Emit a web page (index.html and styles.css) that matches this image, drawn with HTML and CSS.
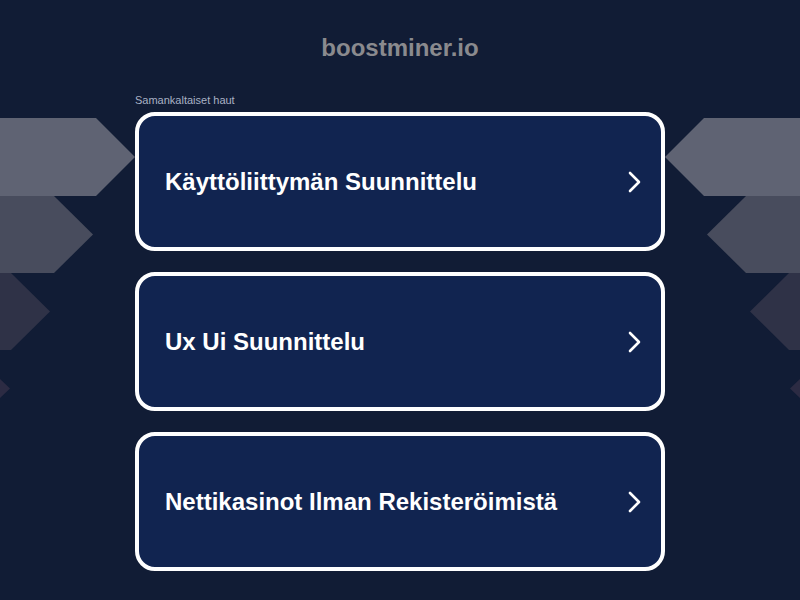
FILE: index.html
```html
<!DOCTYPE html>
<html lang="fi">
  <head>
    <meta charset="UTF-8" />
    <meta name="viewport" content="width=device-width, initial-scale=1.0" />
    <title>boostminer.io</title>
    <link rel="stylesheet" href="styles.css">
  </head>
  <body>
    <svg class="backdrop" width="800" height="600" viewBox="0 0 800 600">
      <polygon fill="#5f6373" points="0,118 96,118 135,157 96,196 0,196" />
      <polygon fill="#484c5d" points="0,196 54,196 93,234.5 54,273 0,273" />
      <polygon fill="#2f3247" points="0,273 11,273 50,311.5 11,350 0,350" />
      <polygon fill="#2c2b43" points="0,350 -31,350 10,388.5 -31,427 0,427" />
      <polygon fill="#5f6373" points="800,118 704,118 665,157 704,196 800,196" />
      <polygon fill="#484c5d" points="800,196 746,196 707,234.5 746,273 800,273" />
      <polygon fill="#2f3247" points="800,273 789,273 750,311.5 789,350 800,350" />
      <polygon fill="#2c2b43" points="800,350 831,350 790,388.5 831,427 800,427" />
    </svg>

    <main class="page">
      <h1 class="domain">boostminer.io</h1>

      <section class="related">
        <p class="related-title">Samankaltaiset haut</p>

        <a class="result" href="#">
          <span>Käyttöliittymän Suunnittelu</span>
          <svg class="chevron" width="14" height="22" viewBox="0 0 14 22">
            <path d="M2 2 L11 11 L2 20" />
          </svg>
        </a>
        <a class="result" href="#">
          <span>Ux Ui Suunnittelu</span>
          <svg class="chevron" width="14" height="22" viewBox="0 0 14 22">
            <path d="M2 2 L11 11 L2 20" />
          </svg>
        </a>
        <a class="result" href="#">
          <span>Nettikasinot Ilman Rekisteröimistä</span>
          <svg class="chevron" width="14" height="22" viewBox="0 0 14 22">
            <path d="M2 2 L11 11 L2 20" />
          </svg>
        </a>
      </section>
    </main>
  </body>
</html>
```

FILE: styles.css
```css
* {
  margin: 0;
  padding: 0;
  box-sizing: border-box;
}

body {
  height: 100vh;
  overflow: hidden;
  background-color: #111c35;
  font-family: "Liberation Sans", Arial, sans-serif;
  position: relative;
}

.backdrop {
  position: absolute;
  top: 0;
  left: 0;
}

.page {
  position: relative;
  width: 530px;
  margin: 0 auto;
}

.domain {
  padding-top: 34px;
  height: 94px;
  text-align: center;
  font-size: 24px;
  line-height: 28px;
  font-weight: bold;
  color: #8a8a8e;
}

.related-title {
  font-size: 11px;
  line-height: 13px;
  color: #a9b1c4;
  margin-bottom: 5px;
}

.result {
  display: flex;
  align-items: center;
  justify-content: space-between;
  height: 139px;
  margin-bottom: 21px;
  padding: 0 19px 0 26px;
  background-color: #112450;
  border: 4px solid #ffffff;
  border-radius: 20px;
  color: #ffffff;
  text-decoration: none;
  font-size: 24px;
  font-weight: bold;
}

.chevron {
  fill: none;
  stroke: #ffffff;
  stroke-width: 2.6;
  stroke-linecap: round;
  stroke-linejoin: round;
}
```
